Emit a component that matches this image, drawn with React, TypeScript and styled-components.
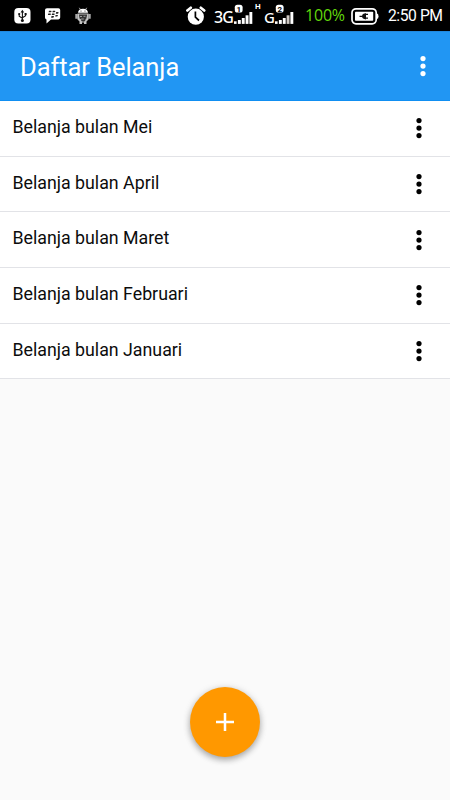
import React from 'react';
import styled, { createGlobalStyle } from 'styled-components';

const GlobalStyle = createGlobalStyle`
  * { box-sizing: border-box; }
  html, body { margin: 0; padding: 0; background: #fafafa; }
  body { font-family: Roboto, "Noto Sans", sans-serif; }
  svg { display: block; flex: none; }
`;

const Screen = styled.main`
  display: flex;
  flex-direction: column;
  align-items: stretch;
  width: 450px;
  height: 800px;
  background: #fafafa;
  overflow: hidden;
`;

const StatusBar = styled.div`
  flex: none;
  display: flex;
  justify-content: space-between;
  height: 31px;
  padding: 0 8px 0 14px;
  background: #000;
  color: #fff;
`;

const Notifications = styled.div`
  display: flex;
  align-items: center;
  gap: 14px;
`;

const SystemTray = styled.div`
  display: flex;
  align-items: flex-start;
`;

const TrayItem = styled.div<{ $gap: number }>`
  margin-left: ${(p) => p.$gap}px;
`;

const StatusText = styled.span<{ $width: number; $size: number; $top: number; $color?: string; $gap: number; $face?: string; $spacing?: number; $weight?: number; $line?: number }>`
  flex: none;
  width: ${(p) => p.$width}px;
  margin-left: ${(p) => p.$gap}px;
  padding-top: ${(p) => p.$top}px;
  font-family: ${(p) => p.$face ?? 'Roboto'}, sans-serif;
  font-size: ${(p) => p.$size}px;
  font-weight: ${(p) => p.$weight ?? 400};
  line-height: ${(p) => p.$line ?? 20}px;
  letter-spacing: ${(p) => p.$spacing ?? 0}px;
  white-space: nowrap;
  color: ${(p) => p.$color ?? '#fff'};
`;

const AppBar = styled.header`
  flex: none;
  display: flex;
  align-items: center;
  justify-content: space-between;
  height: 70px;
  padding: 0 17.5px 0 20px;
  background: #2196f3;
  box-shadow: inset 0 1px 0 #2089df, inset 0 -1px 0 #118ff2;
  color: #fff;
`;

const Title = styled.h1`
  margin: 2px 0 0;
  font-size: 25.5px;
  font-weight: 400;
  line-height: 34px;
  letter-spacing: -0.07px;
`;

const MenuButton = styled.button`
  display: block;
  width: 20px;
  height: 24px;
  padding: 0;
  border: 0;
  background: none;
  color: inherit;
`;

const List = styled.ul`
  flex: none;
  margin: 0;
  padding: 0;
  list-style: none;
`;

const Row = styled.li`
  display: flex;
  align-items: center;
  justify-content: space-between;
  height: 55.7px;
  padding: 0 21.3px 0 12.4px;
  background: #fff;
  border-bottom: 1px solid #e2e3e7;
  color: #000;
`;

const RowLabel = styled.span`
  margin-top: -3px;
  font-size: 17.8px;
  line-height: 24px;
  letter-spacing: 0;
  color: #0c0c0c;
`;

const Footer = styled.footer`
  margin-top: auto;
  display: flex;
  justify-content: center;
  padding-bottom: 42.7px;
`;

const AddButton = styled.button`
  display: grid;
  place-items: center;
  width: 70px;
  height: 70px;
  padding: 0;
  border: 0;
  border-radius: 50%;
  background: #ff9800;
  box-shadow: 0 3px 6px rgba(0, 0, 0, 0.28), 0 1px 9px rgba(0, 0, 0, 0.12);
`;

const Dots = () => (
  <svg width="20" height="24" viewBox="0 0 20 24" fill="currentColor">
    <circle cx="10" cy="4.6" r="2.6" />
    <circle cx="10" cy="12.1" r="2.6" />
    <circle cx="10" cy="19.6" r="2.6" />
  </svg>
);

const UsbIcon = () => (
  <svg width="17" height="16" viewBox="0 0 17 16">
    <rect x="0.3" y="0" width="16.2" height="15.6" rx="4" fill="#fff" />
    <g fill="none" stroke="#111" strokeWidth="1.1">
      <path d="M8.4 3v9M5.2 6v2.2l3.2 2M11.6 6v1.8l-3.2 2" />
    </g>
    <path d="M8.4 1.8l1.8 2.6H6.6z" fill="#111" />
    <circle cx="8.4" cy="12.4" r="1.5" fill="#111" />
    <circle cx="5.2" cy="6" r="1.1" fill="#111" />
    <rect x="10.6" y="5" width="2" height="2" fill="#111" />
  </svg>
);

const MessengerIcon = () => (
  <svg width="16" height="16" viewBox="0 0 16 16">
    <path d="M2 .3h11.4q1.8 0 1.8 1.8v7.5q0 1.8-1.8 1.8H6L1.5 15.4v-4Q0 11 0 9.600V2.100Q0 .3 2 .3z" fill="#fff" />
    <g fill="#222">
      <path d="M4 2.700h2q.8.200.5.900t-1 .7H3.600zM7.800 2.700h2q.8.200.5.900t-1 .7H7.400zM3.300 5.500h2q.8.200.5.900t-1 .7H2.900zM7.100 5.500h2q.8.200.5.900t-1 .7H6.700zM11.200 4.100h1.800q.8.200.5.900t-1 .7h-1.700zM10.600 6.900h1.800q.8.200.5.900t-1 .7h-1.700zM6.500 8.100h1.900q.8.200.5.900t-1 .7H6.100z" />
    </g>
  </svg>
);

const DebugIcon = () => (
  <svg width="16" height="18" viewBox="0 0 16 18">
    <path d="M4.300.8l1 1.600M11.700.8l-1 1.600" stroke="#ddd" strokeWidth=".8" />
    <path d="M3 5.800Q3.300 1.700 8 1.700t5 4.100z" fill="#fff" />
    <path d="M2.500 6.500h11v6l-2 2v2.500h-2.500v-1.500h-2v1.500H4.500v-2.500l-2-2z" fill="#c4c4c4" />
    <path d="M.3 7h2.500v4.800H.300zM13.200 7h2.500v4.800h-2.500z" fill="#aaa" />
    <path d="M4 7.500h8.200l-1 4.500-1 .7v1.300l-2 .8-2-.8v-1.500L4.500 11.500z" fill="#333" />
    <path d="M5 9.500h2M8.500 9.300h2M6.200 12h2.600" stroke="#bbb" strokeWidth=".8" />
    <circle cx="6" cy="4" r=".6" fill="#222" />
    <circle cx="10" cy="4" r=".6" fill="#222" />
  </svg>
);

const AlarmIcon = () => (
  <svg width="20" height="31" viewBox="0 0 20 31">
    <circle cx="9.8" cy="16.7" r="8.1" fill="#fff" />
    <path d="M1.400 10.500l3.400-2.700M18.200 10.500l-3.400-2.700" stroke="#fff" strokeWidth="2.700" strokeLinecap="round" />
    <path d="M9.400 11.500v5.700l3.600 3.300" fill="none" stroke="#000" strokeWidth="1.7" />
  </svg>
);

const BadgeText = styled.text`
  font: 700 8px Roboto, sans-serif;
  fill: #000;
`;

const Signal = ({ slot, dim }: { slot: string; dim: boolean }) => (
  <svg width="20" height="31" viewBox="0 0 20 31">
    <rect x="0.8" y="4.7" width="7.8" height="7.8" rx="2.6" fill="#fff" />
    <BadgeText x="4.7" y="11.5" textAnchor="middle">{slot}</BadgeText>
    <g fill="#fff">
      <rect x="0" y="21.300" width="2.600" height="2.600" />
      <rect x="3.900" y="20" width="2.900" height="3.900" />
      <rect x="7.800" y="18" width="2.900" height="5.900" />
      <rect x="11.600" y="15.300" width="2.900" height="8.600" fill={dim ? '#cfc9c5' : '#fff'} />
      <rect x="15.400" y="12" width="2.900" height="11.900" />
    </g>
  </svg>
);

const BatteryIcon = () => (
  <svg width="28" height="31" viewBox="0 0 28 31">
    <rect x="1" y="8.8" width="24.2" height="15" rx="4" fill="none" stroke="#fff" strokeWidth="1.7" />
    <path d="M26 13.500q1.500.2 1.500 2.800T26 19" fill="#fff" />
    <rect x="4" y="11.8" width="18.2" height="9" rx=".8" fill="#fff" />
    <path d="M8.500 16.300h3M14 14.400h3M14 18.200h3" stroke="#111" strokeWidth="1.3" />
    <path d="M15 13.200v6.200q-4-.2-4-3.100t4-3.100z" fill="#111" />
  </svg>
);

const items = [
  'Belanja bulan Mei',
  'Belanja bulan April',
  'Belanja bulan Maret',
  'Belanja bulan Februari',
  'Belanja bulan Januari',
];

export default function App() {
  return (
    <Screen>
      <GlobalStyle />
      <StatusBar>
        <Notifications>
          <UsbIcon />
          <MessengerIcon />
          <DebugIcon />
        </Notifications>
        <SystemTray>
          <AlarmIcon />
          <StatusText $gap={8} $width={20} $size={16} $top={7} $weight={500} $spacing={-0.9} $face="'Noto Sans'">3G</StatusText>
          <Signal slot="1" dim={false} />
          <StatusText $gap={1} $width={7} $size={8} $top={2} $line={10} $weight={700}>H</StatusText>
          <StatusText $gap={2} $width={11} $size={15} $top={7} $weight={500} $spacing={-0.9} $face="'Noto Sans'">G</StatusText>
          <Signal slot="2" dim />
          <StatusText $gap={10} $width={40} $size={16} $top={5} $color="#62d80c" $spacing={-0.2} $face="'Open Sans'">100%</StatusText>
          <TrayItem $gap={6}><BatteryIcon /></TrayItem>
          <StatusText $gap={9} $width={54} $size={15.7} $top={6} $spacing={-0.45}>2:50 PM</StatusText>
        </SystemTray>
      </StatusBar>
      <AppBar>
        <Title>Daftar Belanja</Title>
        <MenuButton aria-label="Menu"><Dots /></MenuButton>
      </AppBar>
      <List>
        {items.map((label) => (
          <Row key={label}>
            <RowLabel>{label}</RowLabel>
            <MenuButton aria-label="Menu"><Dots /></MenuButton>
          </Row>
        ))}
      </List>
      <Footer>
        <AddButton aria-label="Tambah">
          <svg width="20" height="20" viewBox="0 0 20 20">
            <path d="M10 1v18M1 10h18" stroke="#fff" strokeWidth="2.5" />
          </svg>
        </AddButton>
      </Footer>
    </Screen>
  );
}
